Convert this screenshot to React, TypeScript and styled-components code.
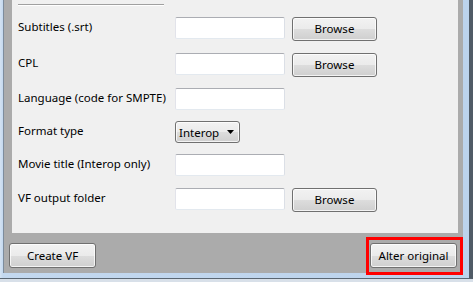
import * as React from "react";
import styled, { createGlobalStyle } from "styled-components";

const GlobalStyle = createGlobalStyle`
  html, body {
    margin: 0;
    padding: 0;
    background: #d8e0e9;
  }
  body {
    font-family: "Noto Sans", "Segoe UI", sans-serif;
    font-size: 11.5px;
    color: #000;
  }
`;

type Row = {
  label: string;
  height: number;
  field: "input" | "browse" | "combo";
};

const rows: Row[] = [
  { label: "Subtitles (.srt)", height: 36, field: "browse" },
  { label: "CPL", height: 35, field: "browse" },
  { label: "Language (code for SMPTE)", height: 33, field: "input" },
  { label: "Format type", height: 33, field: "combo" },
  { label: "Movie title (Interop only)", height: 34, field: "input" },
  { label: "VF output folder", height: 34, field: "browse" },
];

const App: React.FC = () => {
  return (
    <Screen>
      <GlobalStyle />
      <Window>
        <Client>
          <Panel>
            <Separator />
            <Form $rows={rows.map((r) => r.height + "px").join(" ")}>
              {rows.map((row) => (
                <React.Fragment key={row.label}>
                  <Label>{row.label}</Label>
                  {row.field === "combo" ? (
                    <Combo>
                      <span>Interop</span>
                      <svg width="7" height="4" viewBox="0 0 7 4">
                        <path d="M0 0h7L3.5 4z" fill="#000" />
                      </svg>
                    </Combo>
                  ) : (
                    <TextBox type="text" />
                  )}
                  {row.field === "browse" ? <Button $w={85}>Browse</Button> : <span />}
                </React.Fragment>
              ))}
            </Form>
          </Panel>
          <BottomBar>
            <Button $w={87} $h={25}>Create VF</Button>
            <Highlight>
              <Button $w={87} $h={25}>Alter original</Button>
            </Highlight>
          </BottomBar>
        </Client>
      </Window>
    </Screen>
  );
};

const Screen = styled.div`
  width: 473px;
  height: 282px;
  overflow: hidden;
  background: #d8e0e9;
`;

const Window = styled.div`
  box-sizing: border-box;
  width: 473px;
  height: 279px;
  padding: 0 6px 5px 3px;
  background: linear-gradient(90deg, #d4e3f3 0px, #c3d8ef 3px, #bcd3ec 100%);
  border-right: 4px solid #505b66;
  border-bottom: 1px solid #5a6672;
`;

const Client = styled.div`
  height: 273px;
  display: flex;
  flex-direction: column;
  background: #ababab;
  border-left: 1px solid #7d8c9c;
`;

const Panel = styled.div`
  height: 233px;
  margin: 0 5px 0 8px;
  padding: 4px 0 0 6px;
  box-sizing: border-box;
  background: #f0f0f0;
`;

const Separator = styled.div`
  width: 146px;
  height: 1px;
  background: #a0a0a0;
  border-bottom: 1px solid #ffffff;
  margin-bottom: 11px;
`;

const Form = styled.div<{ $rows: string }>`
  display: grid;
  grid-template-columns: 150px 110px 85px;
  grid-template-rows: ${(p) => p.$rows};
  column-gap: 7px;
  align-items: start;
`;

const Label = styled.div`
  line-height: 16px;
  padding-top: 2px;
  white-space: nowrap;
`;

const TextBox = styled.input`
  box-sizing: border-box;
  width: 110px;
  height: 22px;
  margin: 0;
  padding: 0 3px;
  background: #fff;
  border: 1px solid;
  border-color: #abadb3 #dbdfe6 #e3e9ef #e2e3ea;
  border-radius: 2px;
  font: inherit;
  outline: none;
`;

const Button = styled.button<{ $w: number; $h?: number }>`
  box-sizing: border-box;
  width: ${(p) => p.$w}px;
  height: ${(p) => p.$h ?? 24}px;
  margin: 0;
  padding: 0 0 1px;
  border: 1px solid #707070;
  border-radius: 3px;
  background: linear-gradient(#f2f2f2 0%, #ebebeb 50%, #dddddd 50%, #cfcfcf 100%);
  box-shadow: inset 0 0 0 1px rgba(255, 255, 255, 0.75);
  font: inherit;
  color: #000;
  text-align: center;
`;

const Combo = styled.div`
  box-sizing: border-box;
  width: 65px;
  height: 22px;
  display: flex;
  align-items: center;
  justify-content: space-between;
  padding: 0 5px 0 3px;
  border: 1px solid #707070;
  border-radius: 3px;
  background: linear-gradient(#f2f2f2 0%, #ebebeb 50%, #dddddd 50%, #cfcfcf 100%);
  box-shadow: inset 0 0 0 1px rgba(255, 255, 255, 0.75);
  line-height: 16px;

  span {
    padding-top: 1px;
  }
`;

const BottomBar = styled.div`
  flex: 1;
  display: flex;
  justify-content: space-between;
  align-items: flex-start;
  padding: 10px 6px 0 5px;
`;

const Highlight = styled.div`
  position: relative;

  &::after {
    content: "";
    position: absolute;
    top: -6px;
    right: -6px;
    bottom: -7px;
    left: -4px;
    border: 3px solid #ff0000;
    pointer-events: none;
  }
`;

export default App;
